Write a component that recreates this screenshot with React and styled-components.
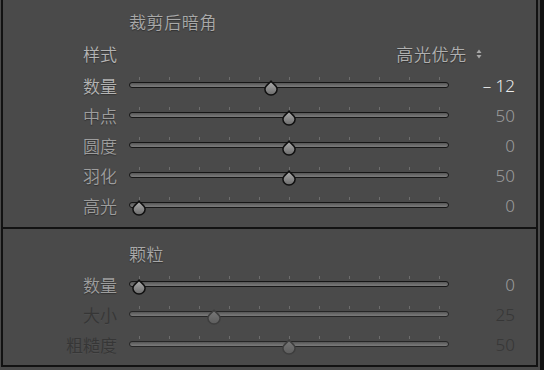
import React from "react";
import styled, { createGlobalStyle } from "styled-components";

const Global = createGlobalStyle`
  html, body { margin: 0; padding: 0; background: #4a4a4a; }
  body { font-family: "Noto Sans CJK SC", "Noto Sans", sans-serif; }
`;

const Page = styled.div`
  display: flex;
  width: 544px;
  height: 370px;
  background: #4a4a4a;
  overflow: hidden;
`;

const Panel = styled.div`
  margin-left: 1px;
  width: 533px;
  height: 365px;
  border: 2px solid #121212;
  border-top: none;
  display: flex;
  flex-direction: column;
`;

const Gap = styled.div`
  width: 2px;
`;

const Edge = styled.div`
  width: 4px;
  background: #111;
`;

const Section = styled.div`
  display: flex;
  flex-direction: column;
  padding-top: ${(p) => p.$top}px;
  padding-bottom: ${(p) => p.$bottom}px;
`;

const Divider = styled.div`
  height: 2px;
  background: #121212;
`;

const Title = styled.div`
  margin-left: 126px;
  height: 30px;
  line-height: 30px;
  font-size: 17px;
  font-weight: 350;
  letter-spacing: 0.6px;
  color: #a9a9a9;
  text-shadow: 0 1px 1px rgba(0, 0, 0, 0.35);
`;

const Row = styled.div`
  display: flex;
  align-items: center;
  height: ${(p) => p.$h || 30}px;
`;

const tones = {
  bright: "#b4b4b4",
  normal: "#9e9e9e",
  dim: "#363636",
};

const Label = styled.div`
  width: 114px;
  margin-right: 12px;
  text-align: right;
  font-size: 17px;
  font-weight: 350;
  color: ${(p) => tones[p.$tone]};
  text-shadow: ${(p) => (p.$tone === "dim" ? "0 1px 0 rgba(255,255,255,0.04)" : "0 1px 1px rgba(0,0,0,0.35)")};
`;

const valueTones = {
  white: "#ececec",
  normal: "#9c9c9c",
  dim: "#363636",
};

const Value = styled.div`
  width: 66px;
  text-align: right;
  font-family: "Noto Sans", "Open Sans", sans-serif;
  font-size: 17px;
  font-weight: 300;
  color: ${(p) => valueTones[p.$tone]};
`;

const Select = styled.div`
  margin-left: auto;
  margin-right: 54px;
  display: flex;
  align-items: center;
  gap: 9px;
  font-size: 17px;
  font-weight: 350;
  letter-spacing: 0.7px;
  color: #b0b0b0;
  text-shadow: 0 1px 1px rgba(0, 0, 0, 0.35);
`;

const Slider = styled.div`
  position: relative;
  width: 320px;
  height: 30px;
  display: flex;
  flex-direction: column;
  padding-top: 7px;
  box-sizing: border-box;
`;

const Ticks = styled.div`
  display: flex;
  justify-content: space-between;
  padding: 0 9px 0 10px;
  height: 3px;
  margin-bottom: 2px;
`;

const Tick = styled.div`
  width: 1px;
  height: 3px;
  background: #6c6c6c;
`;

const Track = styled.div`
  height: 6px;
  box-sizing: border-box;
  border: 1px solid ${(p) => (p.$disabled ? "#262626" : "#161616")};
  border-radius: 3px;
  background: linear-gradient(to bottom, #555 0%, #6e6e6e 60%, #7a7a7a 100%);
`;

const ThumbWrap = styled.div`
  position: absolute;
  top: 7px;
  width: 16px;
  height: 16px;
  margin-left: -8px;
`;

function Thumb({ pos, disabled }) {
  const id = disabled ? "tg-d" : "tg";
  return (
    <ThumbWrap style={{ left: pos }}>
      <svg width="16" height="16" viewBox="0 0 16 16">
        <defs>
          <linearGradient id={id} x1="0" y1="0" x2="0" y2="1">
            <stop offset="0" stopColor={disabled ? "#7a7a7a" : "#b2b2b2"} />
            <stop offset="1" stopColor={disabled ? "#5c5c5c" : "#6a6a6a"} />
          </linearGradient>
        </defs>
        <path
          d="M8 1 C9.2 3.6 14.1 5.4 14.1 9 A6.1 6.1 0 0 1 1.9 9 C1.9 5.4 6.8 3.6 8 1 Z"
          fill={`url(#${id})`}
          stroke={disabled ? "#3e3e3e" : "#101010"}
          strokeWidth="1.5"
          strokeLinejoin="round"
        />
      </svg>
    </ThumbWrap>
  );
}

function SliderRow({ label, value, display, min, max, labelTone, valueTone, disabled }) {
  const frac = (value - min) / (max - min);
  const pos = 10 + frac * 300;
  return (
    <Row>
      <Label $tone={labelTone}>{label}</Label>
      <Slider>
        <Ticks>
          {Array.from({ length: 11 }).map((_, i) => (
            <Tick key={i} />
          ))}
        </Ticks>
        <Track $disabled={disabled} />
        <Thumb pos={pos} disabled={disabled} />
      </Slider>
      <Value $tone={valueTone}>{display}</Value>
    </Row>
  );
}

const vignette = [
  { label: "数量", value: -12, display: "– 12", min: -100, max: 100, labelTone: "bright", valueTone: "white" },
  { label: "中点", value: 50, display: "50", min: 0, max: 100, labelTone: "normal", valueTone: "normal" },
  { label: "圆度", value: 0, display: "0", min: -100, max: 100, labelTone: "normal", valueTone: "normal" },
  { label: "羽化", value: 50, display: "50", min: 0, max: 100, labelTone: "normal", valueTone: "normal" },
  { label: "高光", value: 0, display: "0", min: 0, max: 100, labelTone: "normal", valueTone: "normal" },
];

const grain = [
  { label: "数量", value: 0, display: "0", min: 0, max: 100, labelTone: "normal", valueTone: "normal" },
  { label: "大小", value: 25, display: "25", min: 0, max: 100, labelTone: "dim", valueTone: "dim", disabled: true },
  { label: "粗糙度", value: 50, display: "50", min: 0, max: 100, labelTone: "dim", valueTone: "dim", disabled: true },
];

export default function App() {
  return (
    <>
      <Global />
      <Page>
        <Panel>
          <Section $top={7} $bottom={7}>
            <Title>裁剪后暗角</Title>
            <Row $h={33}>
              <Label $tone="bright">样式</Label>
              <Select>
                高光优先
                <svg width="6" height="10" viewBox="0 0 6 10">
                  <path d="M3 0.5 L5.5 4 L0.5 4 Z" fill="#a8a8a8" />
                  <path d="M3 9.5 L5.5 6 L0.5 6 Z" fill="#a8a8a8" />
                </svg>
              </Select>
            </Row>
            {vignette.map((r) => (
              <SliderRow key={r.label} {...r} />
            ))}
          </Section>
          <Divider />
          <Section $top={10} $bottom={6}>
            <Title>颗粒</Title>
            {grain.map((r) => (
              <SliderRow key={r.label} {...r} />
            ))}
          </Section>
        </Panel>
        <Gap />
        <Edge />
      </Page>
    </>
  );
}
